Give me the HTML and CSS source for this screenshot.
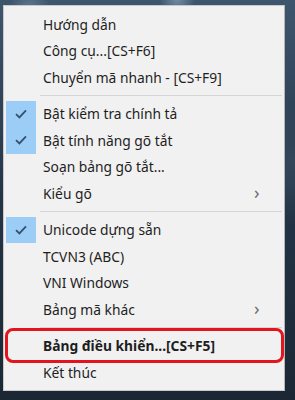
FILE: index.html
```html
<!DOCTYPE html>
<html lang="vi">
<head>
    <meta charset="UTF-8">
    <meta name="viewport" content="width=device-width, initial-scale=1.0">
    <title>Menu UniKey</title>
    <link rel="stylesheet" href="styles.css">
</head>
<body>
    <div class="desktop">
        <ul class="menu">
            <li class="muc"><span class="dau"></span><span class="nhan">Hướng dẫn</span></li>
            <li class="muc"><span class="dau"></span><span class="nhan">Công cụ...[CS+F6]</span></li>
            <li class="muc"><span class="dau"></span><span class="nhan">Chuyển mã nhanh - [CS+F9]</span></li>
            <li class="ngan"></li>
            <li class="muc chon"><span class="dau"><svg viewBox="0 0 12 10" width="12" height="10"><path d="M1 5.2 L4.4 8.4 L11 1.4" fill="none" stroke="#34506e" stroke-width="1.8"/></svg></span><span class="nhan">Bật kiểm tra chính tả</span></li>
            <li class="muc chon"><span class="dau"><svg viewBox="0 0 12 10" width="12" height="10"><path d="M1 5.2 L4.4 8.4 L11 1.4" fill="none" stroke="#34506e" stroke-width="1.8"/></svg></span><span class="nhan">Bật tính năng gõ tắt</span></li>
            <li class="muc"><span class="dau"></span><span class="nhan">Soạn bảng gõ tắt...</span></li>
            <li class="muc"><span class="dau"></span><span class="nhan">Kiểu gõ</span><span class="mui">&#8250;</span></li>
            <li class="ngan"></li>
            <li class="muc chon"><span class="dau"><svg viewBox="0 0 12 10" width="12" height="10"><path d="M1 5.2 L4.4 8.4 L11 1.4" fill="none" stroke="#34506e" stroke-width="1.8"/></svg></span><span class="nhan">Unicode dựng sẵn</span></li>
            <li class="muc"><span class="dau"></span><span class="nhan">TCVN3 (ABC)</span></li>
            <li class="muc"><span class="dau"></span><span class="nhan">VNI Windows</span></li>
            <li class="muc"><span class="dau"></span><span class="nhan">Bảng mã khác</span><span class="mui">&#8250;</span></li>
            <li class="ngan"></li>
            <li class="muc dam khoanh"><span class="dau"></span><span class="nhan">Bảng điều khiển...[CS+F5]</span></li>
            <li class="muc"><span class="dau"></span><span class="nhan">Kết thúc</span></li>
        </ul>
        <div class="day"></div>
    </div>
</body>
</html>
```

FILE: styles.css
```css
* {
    box-sizing: border-box;
}

body {
    margin: 0;
    width: 295px;
    height: 400px;
    overflow: hidden;
    font-family: "Noto Sans", "Open Sans", sans-serif;
}

.desktop {
    width: 295px;
    height: 400px;
    padding: 5px 10px 0 3px; /* fondo visible alrededor del menu */
    background:
        radial-gradient(circle at 60% 0%, #6f8aa3 0, rgba(111, 138, 163, 0) 18px),
        radial-gradient(circle at 10% 2%, #5d7891 0, rgba(93, 120, 145, 0) 20px),
        radial-gradient(circle at 100% 40%, #34475a 0, rgba(52, 71, 90, 0) 60px),
        linear-gradient(180deg, #3e566d 0%, #243447 50%, #1b2734 100%);
}

.menu {
    list-style: none;
    margin: 0;
    padding: 5px 0 4px;
    width: 282px;
    background: #f1f1f1;
    border: 1px solid #c9c9c9;
    border-right-color: #b5b5b5;
    color: #1e1e1e;
    font-size: 13.8px;
}

.muc {
    display: flex;
    align-items: center;
    height: 26.5px;
    position: relative;
}

.dau {
    flex: 0 0 30px;
    height: 100%;
    margin-left: 2px;
    display: flex;
    align-items: center;
    justify-content: center;
}

.chon .dau {
    background: #9bcdf6;
}

.dau svg {
    display: block;
    flex-shrink: 0;
}

.nhan {
    margin-left: 7px;
    flex: 1;
    white-space: nowrap;
}

.mui {
    width: 30px;
    color: #6a6a6a;
    font-size: 18px;
    line-height: 1;
    padding-bottom: 3px;
}

.ngan {
    height: 10px;
    display: flex;
    align-items: center;
    padding-left: 36px;
    padding-right: 2px;
}

.ngan::after {
    content: "";
    flex: 1;
    height: 1px;
    background: #d6d6d6;
}

.dam {
    font-weight: 700;
}

/* Recuadro rojo de la captura */
.khoanh::after {
    content: "";
    position: absolute;
    left: 1px;
    right: 0;
    top: -5px;
    bottom: -4px;
    border: 3px solid #e2141c;
    border-radius: 8px;
}

.day {
    height: 11px;
}
```
